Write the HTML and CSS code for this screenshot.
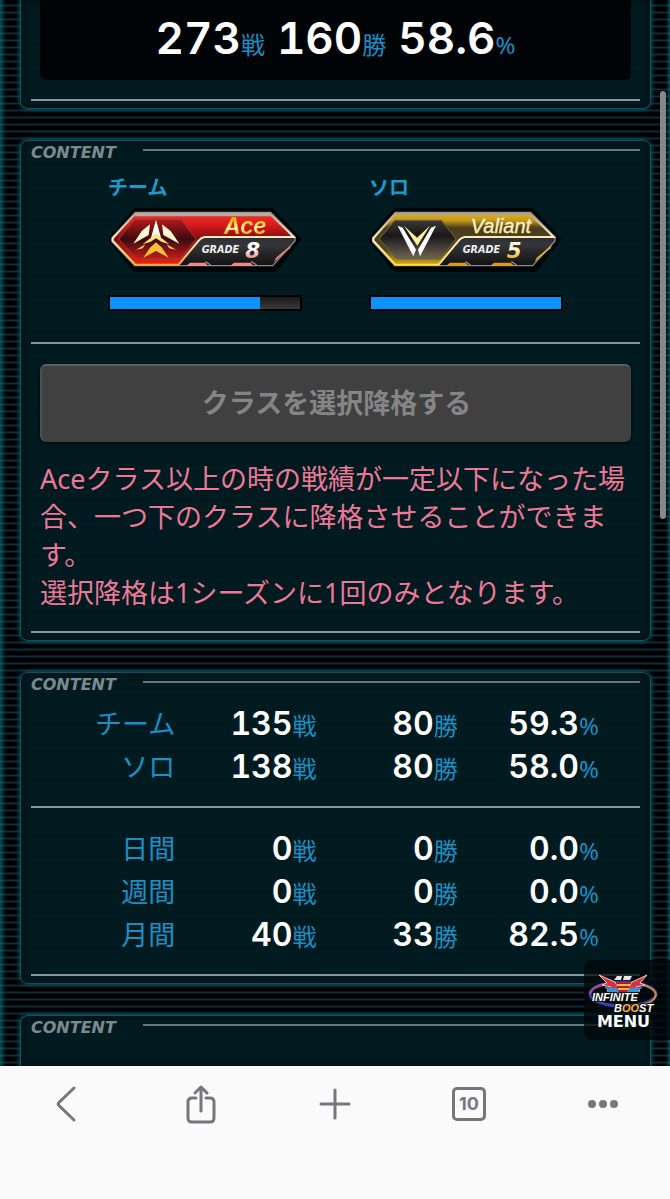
FILE: index.html
```html
<!DOCTYPE html>
<html lang="ja">
<head>
    <meta charset="UTF-8">
    <meta name="viewport" content="width=device-width, initial-scale=1.0">
    <title>戦績</title>
    <link rel="stylesheet" href="styles.css">
</head>
<body>
    <main class="page">
        <section class="panel panel-first">
            <p class="total">
                <span>273<small>戦</small></span>
                <span>160<small>勝</small></span>
                <span>58.6<small>%</small></span>
            </p>
            <hr class="line">
        </section>

        <section class="panel">
            <h2 class="panel-title"><span>CONTENT</span></h2>
            <div class="classes">
                <div class="class-card">
                    <h3>チーム</h3>
                    <svg class="badge" viewBox="54 112 582 204" role="img" aria-label="Ace GRADE 8">
                        <defs>
                            <linearGradient id="redFill" x1="0" y1="0" x2="0" y2="1">
                                <stop offset="0" stop-color="#e8342c"/>
                                <stop offset=".2" stop-color="#e01a1c"/>
                                <stop offset=".5" stop-color="#7e0d12"/>
                                <stop offset="1" stop-color="#f02014"/>
                            </linearGradient>
                            <linearGradient id="redHex" x1="0" y1="0" x2="0" y2="1">
                                <stop offset="0" stop-color="#b01818"/>
                                <stop offset=".5" stop-color="#3c0a10"/>
                                <stop offset="1" stop-color="#c41c18"/>
                            </linearGradient>
                            <linearGradient id="rimRed" x1="0" y1="0" x2="0" y2="1">
                                <stop offset="0" stop-color="#b9aaa0"/>
                                <stop offset=".5" stop-color="#fff0c8"/>
                                <stop offset="1" stop-color="#e8b040"/>
                            </linearGradient>
                            <linearGradient id="darkFill" x1="0" y1="0" x2="0" y2="1">
                                <stop offset="0" stop-color="#101012"/>
                                <stop offset=".6" stop-color="#35363a"/>
                                <stop offset="1" stop-color="#111"/>
                            </linearGradient>
                            <linearGradient id="goldText" x1="0" y1="0" x2="0" y2="1">
                                <stop offset=".2" stop-color="#f0a000"/>
                                <stop offset=".45" stop-color="#ffe040"/>
                                <stop offset=".6" stop-color="#fff6b0"/>
                                <stop offset=".8" stop-color="#e8b020"/>
                            </linearGradient>
                            <linearGradient id="pinkText" x1="0" y1="0" x2="0" y2="1">
                                <stop offset=".45" stop-color="#fff"/>
                                <stop offset=".8" stop-color="#f09090"/>
                            </linearGradient>
                        </defs>
                        <path d="M136 122H546L626 208L556 300H134L62 208Z" fill="#000" stroke="#000" stroke-width="14" stroke-linejoin="round" opacity=".8"/>
                        <path d="M136 128H542L615 202V214L548 288H134L66 216V204Z" fill="url(#darkFill)" stroke="#8a8a90" stroke-width="4"/>
                        <path d="M136 132H540L611 202H344Q334 203 326 213L266 285H136L68 213V206Z" fill="url(#redFill)" stroke="url(#rimRed)" stroke-width="6"/>
                        <path d="M140 129H540L552 140H132Z" fill="#b8aaa0"/>
                        <path d="M134 150H274L318 208L270 268H140L86 208Z" fill="url(#redHex)" stroke="#9c3a34" stroke-width="3"/>
                        <path d="M198 150L214 208L198 196L182 208Z" fill="#fffef0"/>
                        <path d="M180 164L176 196L130 222L155 184ZM216 164L220 196L268 222L242 184Z" fill="#fff6d2"/>
                        <path d="M198 192L238 224L214 216L198 206L182 216L158 224Z" fill="#ffe37c"/>
                        <path d="M138 240L166 224L158 236ZM258 240L230 224L238 236Z" fill="#f5d468"/>
                        <path d="M198 218L216 234L236 264L198 244L160 264L180 234Z" fill="#f4c33a"/>
                        <path d="M288 289L300 279H346L354 289ZM420 289L432 279H482L490 289Z" fill="#f08888"/>
                        <path d="M346 276L362 286M484 276L500 286" stroke="#8d8d92" stroke-width="4"/>
                        <path d="M552 276L558 264L604 226L600 236Z" fill="#e88080"/>
                        <text x="402" y="192" class="badge-name ace">Ace</text>
                        <text x="335" y="250" class="badge-grade">GRADE</text>
                        <text x="466" y="264" class="badge-num" fill="url(#pinkText)">8</text>
                    </svg>
                    <div class="gauge"><div class="gauge-fill" style="width: 79%"></div></div>
                </div>
                <div class="class-card">
                    <h3>ソロ</h3>
                    <svg class="badge" viewBox="57 112 582 204" role="img" aria-label="Valiant GRADE 5">
                        <defs>
                            <linearGradient id="goldFill" x1="0" y1="0" x2="0" y2="1">
                                <stop offset="0" stop-color="#e0b020"/>
                                <stop offset=".13" stop-color="#c89818"/>
                                <stop offset=".28" stop-color="#4a3c1c"/>
                                <stop offset=".7" stop-color="#54451c"/>
                                <stop offset="1" stop-color="#d8a818"/>
                            </linearGradient>
                            <linearGradient id="greyHex" x1="0" y1="0" x2="0" y2="1">
                                <stop offset="0" stop-color="#3a3834"/>
                                <stop offset=".4" stop-color="#18181a"/>
                                <stop offset="1" stop-color="#716452"/>
                            </linearGradient>
                            <linearGradient id="rimGold" x1="0" y1="0" x2="0" y2="1">
                                <stop offset="0" stop-color="#b0a890"/>
                                <stop offset=".5" stop-color="#fff2c0"/>
                                <stop offset="1" stop-color="#ffe040"/>
                            </linearGradient>
                            <linearGradient id="paleText" x1="0" y1="0" x2="0" y2="1">
                                <stop offset=".2" stop-color="#fff"/>
                                <stop offset=".8" stop-color="#ffe890"/>
                            </linearGradient>
                            <linearGradient id="numGold" x1="0" y1="0" x2="0" y2="1">
                                <stop offset=".45" stop-color="#fff6d0"/>
                                <stop offset=".8" stop-color="#f0b428"/>
                            </linearGradient>
                        </defs>
                        <path d="M136 122H546L626 208L556 300H134L62 208Z" fill="#000" stroke="#000" stroke-width="14" stroke-linejoin="round" opacity=".8"/>
                        <path d="M136 128H542L615 202V214L548 288H134L68 216V204Z" fill="url(#darkFill)" stroke="#8a8a90" stroke-width="4"/>
                        <path d="M136 132H540L611 202H344Q334 203 326 213L266 285H136L70 213V206Z" fill="url(#goldFill)" stroke="url(#rimGold)" stroke-width="6"/>
                        <path d="M140 129H540L546 135H136Z" fill="#a9a294"/>
                        <path d="M134 152H274L318 208L270 268H140L88 208Z" fill="url(#greyHex)" stroke="#6c6040" stroke-width="3"/>
                        <path d="M143 168L158 174L198 240L190 260Z" fill="#fff"/>
                        <path d="M258 168L243 174L204 240L210 260Z" fill="#fff"/>
                        <path d="M162 168L201 204L240 168L202 228Z" fill="#fff0a0"/>
                        <path d="M288 289L300 279H346L358 289ZM420 289L432 279H482L494 289Z" fill="#d89a20"/>
                        <path d="M346 276L362 286M484 276L500 286" stroke="#8d8d92" stroke-width="4"/>
                        <path d="M554 276L560 264L606 226L602 236Z" fill="#d8b020"/>
                        <text x="362" y="190" class="badge-name valiant">Valiant</text>
                        <text x="338" y="250" class="badge-grade">GRADE</text>
                        <text x="470" y="264" class="badge-num" fill="url(#numGold)">5</text>
                    </svg>
                    <div class="gauge"><div class="gauge-fill" style="width: 100%"></div></div>
                </div>
            </div>
            <hr class="line">
            <div class="demote">
                <button type="button" class="demote-button" disabled>クラスを選択降格する</button>
                <p class="notice">Aceクラス以上の時の戦績が一定以下になった場合、一つ下のクラスに降格させることができます。<br>選択降格は1シーズンに1回のみとなります。</p>
            </div>
            <hr class="line">
        </section>

        <section class="panel">
            <h2 class="panel-title"><span>CONTENT</span></h2>
            <table class="record">
                <tr><th>チーム</th><td>135<small>戦</small></td><td>80<small>勝</small></td><td>59.3<small>%</small></td></tr>
                <tr><th>ソロ</th><td>138<small>戦</small></td><td>80<small>勝</small></td><td>58.0<small>%</small></td></tr>
            </table>
            <hr class="line">
            <table class="record record-period">
                <tr><th>日間</th><td>0<small>戦</small></td><td>0<small>勝</small></td><td>0.0<small>%</small></td></tr>
                <tr><th>週間</th><td>0<small>戦</small></td><td>0<small>勝</small></td><td>0.0<small>%</small></td></tr>
                <tr><th>月間</th><td>40<small>戦</small></td><td>33<small>勝</small></td><td>82.5<small>%</small></td></tr>
            </table>
            <hr class="line">
        </section>

        <section class="panel panel-last">
            <h2 class="panel-title"><span>CONTENT</span></h2>
        </section>

        <button type="button" class="menu">
            <svg class="menu-logo" viewBox="0 0 72 40" aria-hidden="true">
                <ellipse cx="36" cy="20" rx="33" ry="12" fill="none" stroke="#3a3fae" stroke-width="3"/>
                <path d="M46 9Q68 12 69 21Q67 29 54 31" fill="none" stroke="#c98a3a" stroke-width="2"/>
                <path d="M3 20Q4 13 18 10" fill="none" stroke="#b44a8c" stroke-width="2"/>
                <path d="M12 1L28 8L34 18L20 17L24 13L15 11L20 9Z" fill="#d8323c" stroke="#f5c5c5"/>
                <path d="M60 1L45 8L39 18L53 17L49 13L58 11L53 9Z" fill="#d8323c" stroke="#f5c5c5"/>
                <path d="M17 13L30 14L36 20L24 19ZM56 13L43 14L37 20L49 19Z" fill="#3e8fd8"/>
                <path d="M29 8H44L41 17L36 20L31 17Z" fill="#b01c28"/>
                <path d="M30 11H43M31 15H42" stroke="#f0b440" stroke-width="2"/>
                <path d="M27 6L30 2H35L34 6ZM36 6L37 2H45L43 6Z" fill="#f3e4e4"/>
                <text x="5" y="27" class="logo-text">INFINITE</text>
                <text x="27" y="38" class="logo-text">B<tspan fill="#f5b43c">OO</tspan>ST</text>
            </svg>
            <span>MENU</span>
        </button>
        <div class="scroll-thumb"></div>
    </main>

    <nav class="toolbar">
        <button type="button" aria-label="戻る">
            <svg width="40" height="40" viewBox="0 0 40 40"><path d="M27 4L12 18.500Q10.500 20 12 21.500L27 36"/></svg>
        </button>
        <button type="button" aria-label="共有">
            <svg width="40" height="40" viewBox="0 0 40 40"><path d="M15 14H11Q7 14 7 18V34Q7 38 11 38H29Q33 38 33 34V18Q33 14 29 14H25M20 27V3M14 9L20 3L26 9"/></svg>
        </button>
        <button type="button" aria-label="新しいタブ">
            <svg width="40" height="40" viewBox="0 0 40 40"><path d="M6 20H34M20 6V34"/></svg>
        </button>
        <button type="button" aria-label="タブ一覧"><span class="tab-count">10</span></button>
        <button type="button" aria-label="その他">
            <svg width="40" height="40" viewBox="0 0 40 40"><g class="dots"><circle cx="9" cy="20" r="4"/><circle cx="20" cy="20" r="4"/><circle cx="31" cy="20" r="4"/></g></svg>
        </button>
    </nav>
</body>
</html>
```

FILE: styles.css
```css
* {
    box-sizing: border-box;
}
body {
    margin: 0;
    min-height: 100vh;
    display: flex;
    flex-direction: column;
    background: #000;
    color: #fff;
    font-family: "Noto Sans", "Noto Sans CJK JP", sans-serif;
}
h2, h3, p {
    margin: 0;
}
button {
    padding: 0;
    border: none;
    background: none;
    font-family: inherit;
}
.page {
    position: relative;
    flex: 1;
    display: flex;
    flex-direction: column;
    gap: 31px;
    padding: 0 19px 0 20px;
    overflow: hidden;
    background:
        linear-gradient(to right, rgba(10, 110, 125, 0.7), transparent 6px, transparent calc(100% - 4px), rgba(10, 110, 125, 0.7)),
        repeating-linear-gradient(#000 0, #000 4px, #0a2c3a 5px, #0a2c3a 6px, #000 7px);
}
.panel {
    padding: 0 10px 7px;
    border: 1px solid #0f5661;
    border-radius: 8px;
    background: repeating-linear-gradient(#001a1f 0, #001a1f 4px, #001d22 5px, #001a1f 7px);
    box-shadow: 0 0 4px 1px #0a5563, inset 0 0 8px #000c10;
}
.panel-first {
    border-top: none;
    border-radius: 0 0 8px 8px;
}
.panel-last {
    flex: 1;
    border-bottom: none;
    border-radius: 8px 8px 0 0;
}
.line {
    height: 2px;
    margin: 0;
    border: none;
    background: #87969a;
}
.panel-title {
    display: flex;
    align-items: center;
    gap: 8px;
    height: 24px;
    color: #7d8a8d;
    font: italic bold 16px/24px "DejaVu Sans", sans-serif;
}
.panel-title span {
    min-width: 104px;
}
.panel-title::after {
    content: "";
    flex: 1;
    height: 2px;
    margin-bottom: 6px;
    background: #66777a;
}

/* 通算 */
.total {
    display: flex;
    justify-content: center;
    gap: 12px;
    height: 80px;
    margin: 0 9px 19px;
    border-radius: 0 0 6px 6px;
    background: #000406;
    font-family: Inter, "Noto Sans CJK JP", sans-serif;
    font-size: 44px;
    font-weight: 600;
    font-variant-numeric: tabular-nums;
    line-height: 76px;
}
small {
    color: #1b8fc4;
    font-family: "Noto Sans", "Noto Sans CJK JP", sans-serif;
    font-size: 24px;
    font-weight: 400;
    line-height: 1;
}

/* クラス */
.classes {
    display: flex;
    justify-content: center;
    gap: 67px;
    padding: 9px 0 31px;
}
.class-card {
    width: 194px;
}
.class-card h3 {
    height: 33px;
    color: #1b9acb;
    font-size: 20px;
    line-height: 28px;
}
.badge {
    display: block;
    width: 100%;
    height: 68px;
}
.badge-name {
    font-style: italic;
}
.ace {
    font-family: Inter, sans-serif;
    font-size: 68px;
    font-weight: 600;
    fill: url(#goldText);
}
.valiant {
    font-family: "Liberation Sans", sans-serif;
    font-size: 60px;
    fill: url(#paleText);
    stroke: #fff4c0;
}
.badge-grade {
    font: italic bold 29px "DejaVu Sans", sans-serif;
    fill: #f0f0f0;
}
.badge-num {
    font: italic bold 64px "DejaVu Sans", sans-serif;
}
.gauge {
    height: 16px;
    margin-top: 20px;
    padding: 2px;
    background: linear-gradient(#1a1a1a, #3a3a3a) content-box, #000;
}
.gauge-fill {
    height: 12px;
    background: #0b93fb;
}

/* 降格 */
.demote {
    padding: 20px 9px 19px;
}
.demote-button {
    display: block;
    width: 100%;
    height: 78px;
    padding-bottom: 6px;
    border-top: 2px solid #5a6064;
    border-left: 2px solid #4c5054;
    border-radius: 6px;
    background: #404040;
    box-shadow: 0 1px 3px #000;
    color: #858585;
    font-size: 27px;
    font-weight: bold;
}
.notice {
    margin-top: 18px;
    color: #ee7896;
    font-size: 27px;
    line-height: 38px;
}

/* 戦績 */
.record {
    width: 100%;
    margin: 6px 0 17px;
    padding: 0 41px 0 3px;
    border-spacing: 0;
    table-layout: fixed;
}
.record-period {
    margin: 20px 0 17px;
}
.record th, .record td {
    height: 43px;
    padding: 0;
    text-align: right;
    line-height: 42px;
    vertical-align: top;
}
.record th {
    color: #1b8fc4;
    font-size: 27px;
    font-weight: 400;
}
.record td {
    font-family: Inter, "Noto Sans CJK JP", sans-serif;
    font-size: 32px;
    font-weight: 600;
    font-variant-numeric: tabular-nums;
}

/* メニュー */
.menu {
    position: absolute;
    right: 0;
    bottom: 26px;
    width: 86px;
    height: 80px;
    padding: 4px 10px 0 3px;
    border-radius: 8px 0 0 8px;
    background: rgba(0, 8, 10, 0.75);
    color: #fff;
    text-align: center;
}
.menu-logo {
    display: block;
    width: 72px;
    height: 40px;
}
.menu span {
    display: block;
    font: bold 16px/16px "DejaVu Sans", sans-serif;
}
.logo-text {
    font: italic bold 11px/1 "Liberation Sans", sans-serif;
    fill: #fff;
    stroke: #111;
    stroke-width: 2px;
    paint-order: stroke;
}
.scroll-thumb {
    position: absolute;
    top: 91px;
    right: 4px;
    width: 6px;
    height: 428px;
    border-radius: 3px;
    background: #858789;
}

/* ツールバー */
.toolbar {
    display: grid;
    grid-template-columns: repeat(5, 1fr);
    height: 133px;
    padding: 16px 0 73px;
    background: #fafafa;
}
.toolbar button {
    display: flex;
    align-items: center;
    justify-content: center;
}
.toolbar svg {
    fill: none;
    stroke: #77777b;
    stroke-width: 3px;
    stroke-linecap: round;
    stroke-linejoin: round;
}
.toolbar .dots {
    fill: #77777b;
    stroke: none;
}
.tab-count {
    width: 34px;
    height: 34px;
    border: 3px solid #77777b;
    border-radius: 5px;
    color: #77777b;
    font: bold 18px/28px Inter, sans-serif;
    text-align: center;
}
```
